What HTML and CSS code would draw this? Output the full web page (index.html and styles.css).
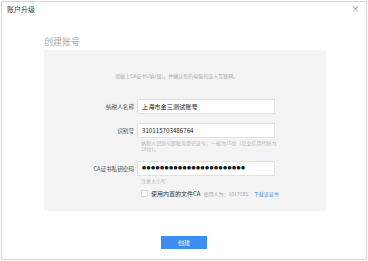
FILE: index.html
```html
<!DOCTYPE html>
<html lang="zh-CN">

<head>
    <meta charset="UTF-8">
    <meta name="viewport" content="width=device-width, initial-scale=1.0">
    <title>账户升级</title>
    <link rel="stylesheet" href="styles.css">
</head>

<body>
    <div class="dialog">
        <div class="dialog-head">
            <span class="dialog-title">账户升级</span>
            <span class="dialog-close">×</span>
        </div>
        <div class="dialog-body">
            <h2 class="section-title">创建账号</h2>
            <div class="panel">
                <p class="tip">请插上CA证书U盾(锁)，并确认您的电脑已连入互联网。</p>
                <div class="row">
                    <label>纳税人名称</label>
                    <div class="input">上海市金三测试账号</div>
                </div>
                <div class="row">
                    <label>识别号</label>
                    <div class="input">310115703486764</div>
                </div>
                <p class="hint">纳税人识别号即税务登记证号，一般为15位（社会信用代码为18位）。</p>
                <div class="row">
                    <label>CA证书私钥密码</label>
                    <div class="input dots">●●●●●●●●●●●●●●●●●●●●●●●</div>
                </div>
                <p class="hint note">注意大小写</p>
                <div class="check-row">
                    <span class="box"></span>
                    <span class="check-text">使用内置的文件CA</span>
                    <span class="user">使用人为：1017CES</span>
                    <a class="link">下载该证书</a>
                </div>
            </div>
        </div>
        <div class="dialog-foot">
            <button class="btn">创建</button>
        </div>
    </div>
</body>

</html>
```

FILE: styles.css
```css
body {
    margin: 0px;
    background: #ffffff;
    font-family: "Noto Sans CJK SC", "Noto Sans", sans-serif;
}

.dialog {
    width: 366px;
    height: 259px;
    margin: 1px 0px 0px 1px;
    border: 1px solid #d6d6d6;
    box-sizing: border-box;
    display: flex;
    flex-direction: column;
}

.dialog-head {
    height: 14px;
    display: flex;
    align-items: center;
    justify-content: space-between;
    padding: 0px 6px 0px 5px;
}

.dialog-title {
    font-size: 7px;
    color: #444444;
}

.dialog-close {
    font-size: 9px;
    color: #888888;
    line-height: 9px;
}

.dialog-body {
    flex: 1;
    padding: 0px 40px 0px 42px;
}

.section-title {
    font-size: 9px;
    font-weight: normal;
    color: #aaaaaa;
    margin: 21px 0px 3px 0px;
    line-height: 11px;
}

.panel {
    height: 161px;
    background: #f4f4f4;
    box-sizing: border-box;
    padding: 23px 0px 0px 0px;
}

.tip {
    margin: 0px 0px 20px 71px;
    font-size: 5px;
    line-height: 6px;
    color: #aaaaaa;
}

.row {
    display: flex;
    align-items: center;
    margin-bottom: 9px;
}

.row label {
    width: 93px;
    text-align: right;
    font-size: 5.6px;
    color: #555555;
    padding-right: 3px;
    box-sizing: border-box;
}

.input {
    width: 138px;
    height: 15px;
    box-sizing: border-box;
    background: #ffffff;
    border: 1px solid #e2e2e2;
    font-size: 6.2px;
    line-height: 13px;
    padding-left: 4px;
    color: #1a1a1a;
}

.dots {
    font-size: 4px;
    letter-spacing: 0.5px;
}

.hint {
    margin: -7px 0px 9px 97px;
    width: 136px;
    font-size: 5px;
    line-height: 6px;
    color: #b4b4b4;
}

.note {
    margin-bottom: 5px;
}

.check-row {
    display: flex;
    align-items: center;
    margin-left: 97px;
    font-size: 6px;
}

.box {
    width: 5px;
    height: 5px;
    border: 1px solid #dddddd;
    background: #ffffff;
    margin-right: 3px;
}

.check-text {
    color: #333333;
    margin-right: 3px;
}

.user {
    color: #aaaaaa;
    font-size: 5px;
    margin-right: 5px;
}

.link {
    color: #4a8ee8;
    font-size: 5px;
}

.dialog-foot {
    height: 49px;
    display: flex;
    justify-content: center;
    padding-top: 25px;
    box-sizing: border-box;
}

.btn {
    width: 46px;
    height: 13px;
    border: none;
    background: #3d8ef0;
    color: #ffffff;
    font-family: inherit;
    font-size: 6px;
    padding: 0px;
}
```
